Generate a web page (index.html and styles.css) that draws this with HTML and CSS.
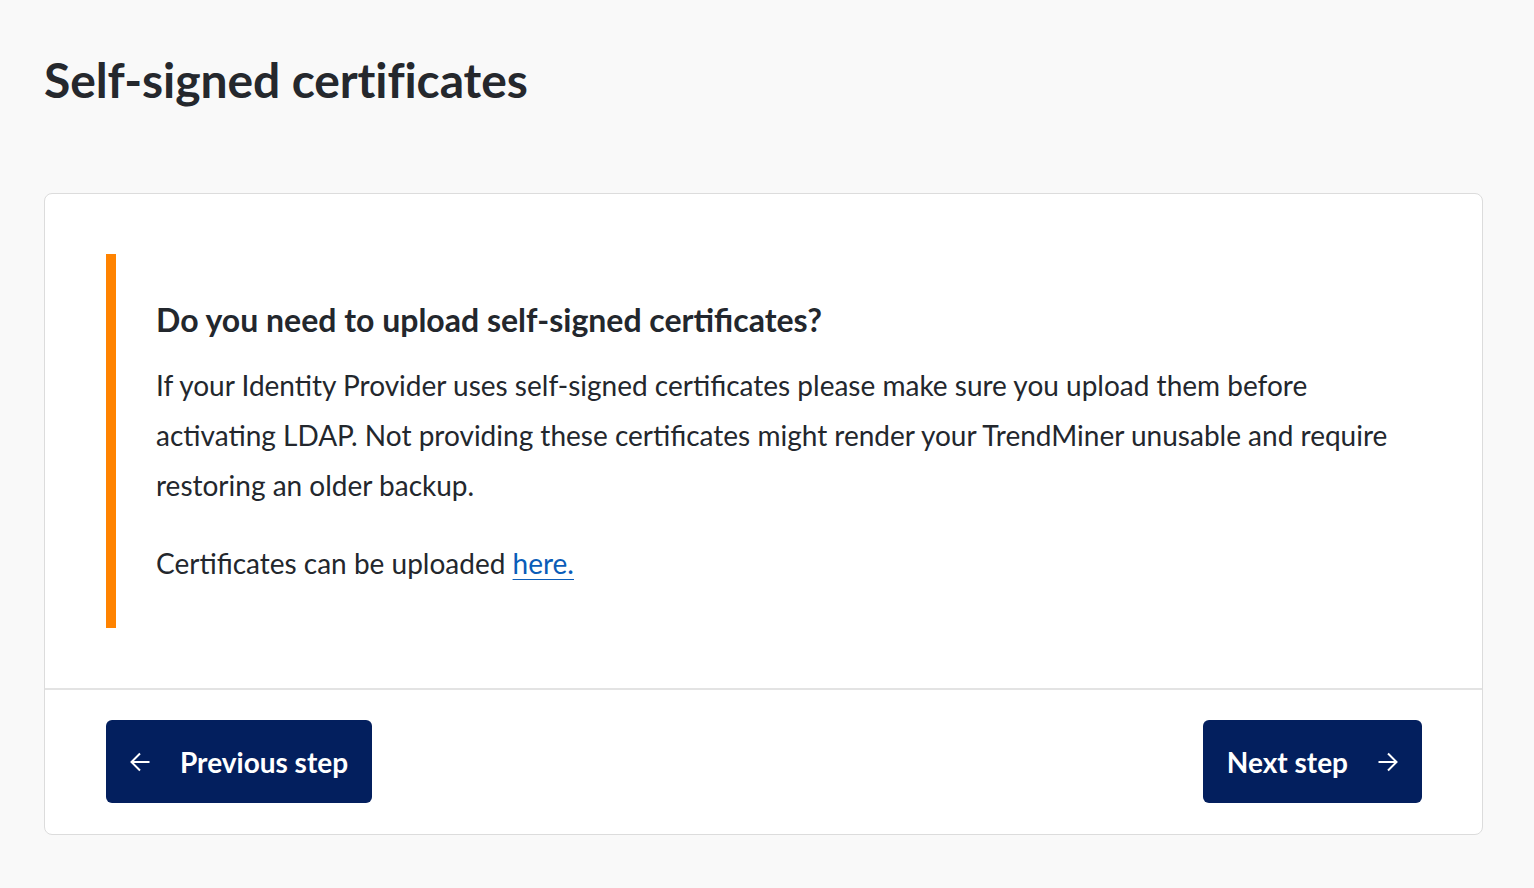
FILE: index.html
```html
<!DOCTYPE html>
<html lang="en">
<head>
<meta charset="utf-8">
<title>Self-signed certificates</title>
<link rel="stylesheet" href="styles.css">
</head>
<body>
<main class="page">
  <h1 class="page-title">Self-signed certificates</h1>
  <section class="card">
    <div class="card-body">
      <div class="notice">
        <h2 class="notice-title">Do you need to upload self-signed certificates?</h2>
        <p class="notice-text">If your Identity Provider uses self-signed certificates please make sure you upload them before activating LDAP. Not providing these certificates might render your TrendMiner unusable and require restoring an older backup.</p>
        <p class="notice-text notice-link-line">Certificates can be uploaded <a class="link" href="#">here.</a></p>
      </div>
    </div>
    <div class="card-footer">
      <button class="btn btn-prev" type="button">
        <svg class="btn-icon" viewBox="0 0 20 20" width="20" height="20" aria-hidden="true"><path d="M19.5 10H1.5M10 1.5L1.5 10L10 18.5" fill="none" stroke="currentColor" stroke-width="2"/></svg>
        <span>Previous step</span>
      </button>
      <button class="btn btn-next" type="button">
        <span>Next step</span>
        <svg class="btn-icon" viewBox="0 0 20 20" width="20" height="20" aria-hidden="true"><path d="M0.5 10H18.5M10 1.5L18.5 10L10 18.5" fill="none" stroke="currentColor" stroke-width="2"/></svg>
      </button>
    </div>
  </section>
</main>
</body>
</html>
```

FILE: styles.css
```css
html, body {
  margin: 0;
  padding: 0;
  background: #f9f9f9;
}
body {
  font-family: Lato, "Open Sans", sans-serif;
  color: #23272d;
}
.page {
  padding: 50px 51px 52px 44px;
}
.page-title {
  margin: 0 0 83px 0;
  font-size: 48px;
  font-weight: 700;
  line-height: 60px;
  letter-spacing: -0.1px;
  color: #25282d;
}
.card {
  background: #ffffff;
  border: 1px solid #dcdcdc;
  border-radius: 8px;
}
.card-body {
  padding: 60px 60px 60px 61px;
}
.notice {
  border-left: 10px solid #ff8300;
  padding: 46px 0 40px 40px;
}
.notice-title {
  margin: 0 0 20px 0;
  font-size: 32px;
  line-height: 40px;
  font-weight: 700;
}
.notice-text {
  margin: 0;
  font-size: 28px;
  line-height: 50px;
  max-width: 1265px;
}
.notice-link-line {
  margin-top: 28px;
}
.link {
  color: #0a5cb8;
  text-decoration: underline;
  text-decoration-thickness: 1px;
  text-underline-offset: 5px;
}
.card-footer {
  border-top: 2px solid #e3e3e3;
  padding: 30px 60px 31px 61px;
  display: flex;
  justify-content: space-between;
  align-items: center;
}
.btn {
  display: flex;
  align-items: center;
  gap: 30px;
  height: 83px;
  padding: 0 24px;
  border: none;
  border-radius: 6px;
  background: #031f5e;
  color: #ffffff;
  font-family: Lato, "Open Sans", sans-serif;
  font-size: 28px;
  font-weight: 700;
  cursor: pointer;
}
.btn-icon {
  display: block;
  flex: none;
}
```
